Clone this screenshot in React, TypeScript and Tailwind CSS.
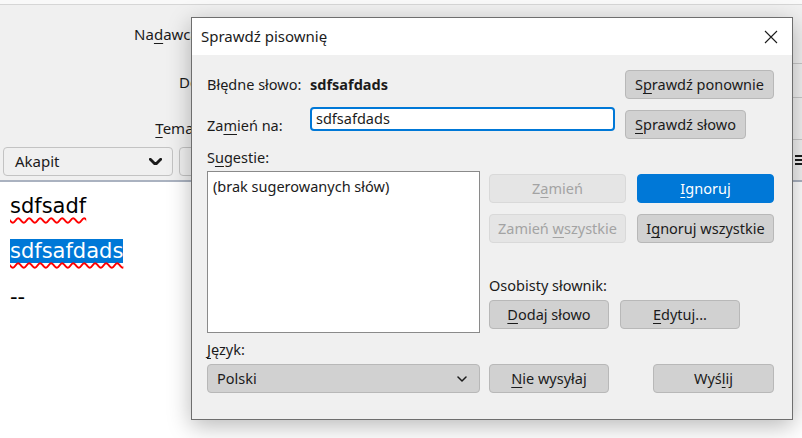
import type { ReactNode } from "react";

const ui = { fontFamily: '"Noto Sans", "Open Sans", sans-serif' };

// Accelerator key letter, underlined like the Windows dialogs do
function K({ children }: { children: ReactNode }) {
  return <span className="underline underline-offset-[3px] decoration-1">{children}</span>;
}

type BtnProps = {
  children: ReactNode;
  className?: string;
  variant?: "normal" | "primary" | "disabled";
};

function Btn({ children, className = "", variant = "normal" }: BtnProps) {
  const look =
    variant === "primary"
      ? "bg-[#0078d7] border-[#0078d7] text-white"
      : variant === "disabled"
        ? "bg-[#e5e5e5] border-[#d9d9d9] text-[#a3a3a3]"
        : "bg-[#d1d1d1] border-[#b8b8b8] text-[#1b1b1b]";
  return (
    <div
      className={`flex h-[29px] items-center justify-center rounded-[4px] border text-[14.5px] leading-none ${look} ${className}`}
    >
      <span className="whitespace-pre">{children}</span>
    </div>
  );
}

function Chevron({ size = 10, stroke = 1.6 }: { size?: number; stroke?: number }) {
  return (
    <svg width={size} height={size * 0.6} viewBox="0 0 10 6" fill="none">
      <path d="M1 1l4 4 4-4" stroke="#1b1b1b" strokeWidth={stroke} strokeLinecap="round" strokeLinejoin="round" />
    </svg>
  );
}

function Composer() {
  return (
    <div className="flex h-[438px] w-[802px] flex-col bg-white" style={ui}>
      <div className="h-[5px] bg-[#f9f9f9] border-b border-[#d6d6d6]" />
      {/* header fields */}
      <div className="relative h-[175px] bg-[#f0f0f0] text-[15px] text-[#1b1b1b]">
        <div className="flex flex-col items-end w-[203px]">
          <div className="mt-[18px] h-[22px] leading-[22px]">
            Na<K>d</K>awca:
          </div>
          <div className="mt-[26px] h-[22px] leading-[22px]">Do:</div>
          <div className="mt-[24px] h-[22px] leading-[22px]">
            <K>T</K>emat:
          </div>
        </div>
        {/* field edges peeking out on the right */}
        <div className="absolute left-[793px] top-[58px] h-px w-[9px] bg-[#c8c8c8]" />
        <div className="absolute left-[793px] top-[92px] h-px w-[9px] bg-[#c8c8c8]" />
        <div className="absolute left-[793px] top-[134px] h-px w-[9px] bg-[#c8c8c8]" />
        {/* toolbar */}
        <div className="absolute left-[3px] top-[142px] flex items-center gap-[6px]">
          <div className="flex h-[29px] w-[170px] items-center justify-between rounded-[4px] border border-[#c3c3c3] bg-[#f0f0f0] pl-[11px] pr-[10px] text-[15px]">
            <span>Akapit</span>
            <Chevron size={13} stroke={2.2} />
          </div>
          <div className="h-[29px] w-[40px] rounded-[4px] border border-[#c3c3c3]" />
        </div>
        <div className="absolute left-[795px] top-[150px] flex flex-col gap-[2px]">
          <div className="h-[2px] w-[7px] bg-[#1b1b1b]" />
          <div className="h-[2px] w-[7px] bg-[#1b1b1b]" />
          <div className="h-[2px] w-[7px] bg-[#1b1b1b]" />
        </div>
      </div>
      <div className="h-[2px] bg-[#aab2c0]" />
      {/* editor */}
      <div
        className="flex-1 bg-white pl-[10px] pt-[10px] text-[21px] text-black"
        style={{ fontFamily: '"DejaVu Sans", sans-serif' }}
      >
        <div className="h-[28px] leading-[28px]">
          <span className="underline decoration-wavy decoration-[#ff0000] decoration-[1.5px] underline-offset-[4px]">
            sdfsadf
          </span>
        </div>
        <div className="mt-[17px] h-[28px] leading-[28px]">
          <span className="bg-[#0078d7] text-white underline decoration-wavy decoration-[#ff0000] decoration-[1.5px] underline-offset-[4px]">
            sdfsafdads
          </span>
        </div>
        <div className="mt-[18px] h-[28px] leading-[28px]">--</div>
      </div>
    </div>
  );
}

function SpellDialog() {
  return (
    <div
      className="absolute left-[191px] top-[17px] flex h-[403px] w-[602px] flex-col border border-[#6e6e6e] bg-[#f0f0f0] text-[14.5px] text-[#1b1b1b] shadow-[0_6px_22px_rgba(0,0,0,0.28)]"
      style={ui}
    >
      {/* title bar */}
      <div className="flex h-[37px] items-center justify-between bg-white pl-[9px] pr-[14px]">
        <span className="text-[15px]">Sprawdź pisownię</span>
        <svg width="14" height="14" viewBox="0 0 14 14" fill="none">
          <path d="M1 1l12 12M13 1L1 13" stroke="#1b1b1b" strokeWidth="1.1" />
        </svg>
      </div>

      <div className="flex flex-col pl-[15px] pr-[18px]">
        {/* wrong word */}
        <div className="mt-[15px] flex h-[29px] items-center">
          <span className="w-[103px]">Błędne słowo:</span>
          <span className="flex-1 font-bold">sdfsafdads</span>
          <Btn className="w-[149px]">
            S<K>p</K>rawdź ponownie
          </Btn>
        </div>

        {/* replace with */}
        <div className="mt-[8px] flex h-[32px] items-start">
          <span className="mt-[8px] w-[103px] leading-[20px]">
            Za<K>m</K>ień na:
          </span>
          <div className="flex h-[24px] w-[305px] items-center rounded-[4px] border-2 border-[#0078d7] bg-white pl-[4px]">
            sdfsafdads
          </div>
          <Btn className="ml-[10px] mt-[3px] w-[121px]">
            <K>S</K>prawdź słowo
          </Btn>
        </div>

        <div className="mt-[8px] h-[20px] leading-[20px]">
          S<K>u</K>gestie:
        </div>

        <div className="mt-[4px] flex gap-[9px]">
          {/* left column */}
          <div className="flex w-[274px] flex-col">
            <div className="h-[162px] border border-[#8a8a8a] bg-white pl-[5px] pt-[4px] leading-[20px]">
              (brak sugerowanych słów)
            </div>
            <div className="mt-[6px] h-[20px] leading-[20px]">
              <K>J</K>ęzyk:
            </div>
            <div className="mt-[5px] flex h-[29px] items-center justify-between rounded-[4px] border border-[#b8b8b8] bg-[#d1d1d1] pl-[9px] pr-[12px]">
              <span>Polski</span>
              <Chevron size={10} stroke={1.5} />
            </div>
          </div>

          {/* right column */}
          <div className="flex w-[285px] flex-col">
            <div className="mt-[3px] grid grid-cols-[137px_137px] gap-x-[11px] gap-y-[11px]">
              <Btn variant="disabled">
                Z<K>a</K>mień
              </Btn>
              <Btn variant="primary">
                <K>I</K>gnoruj
              </Btn>
              <Btn variant="disabled">
                Zamień <K>w</K>szystkie
              </Btn>
              <Btn>
                I<K>g</K>noruj wszystkie
              </Btn>
            </div>
            <div className="mt-[32px] h-[20px] leading-[20px]">Osobisty słownik:</div>
            <div className="mt-[5px] flex gap-[11px]">
              <Btn className="w-[120px]">
                <K>D</K>odaj słowo
              </Btn>
              <Btn className="w-[120px]">
                <K>E</K>dytuj...
              </Btn>
            </div>
            <div className="mt-auto flex justify-between">
              <Btn className="w-[120px]">
                <K>N</K>ie wysyłaj
              </Btn>
              <Btn className="w-[121px]">
                Wyś<K>l</K>ij
              </Btn>
            </div>
          </div>
        </div>
      </div>
    </div>
  );
}

export default function App() {
  return (
    <div className="relative h-[438px] w-[802px] overflow-hidden">
      <Composer />
      <SpellDialog />
    </div>
  );
}
